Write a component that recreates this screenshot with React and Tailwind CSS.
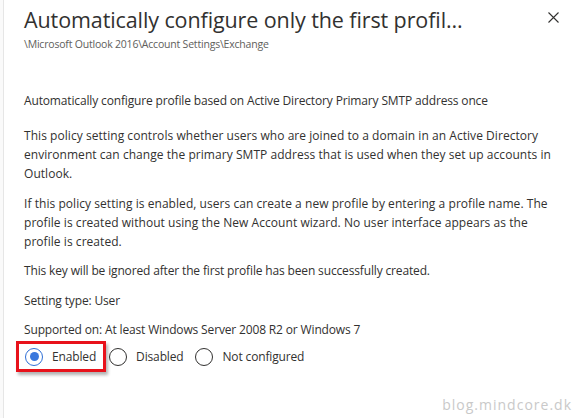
function Radio({ label, checked }) {
  return (
    <label className="flex items-center gap-[9px]">
      <span
        className={
          "flex h-[18px] w-[18px] items-center justify-center rounded-full border " +
          (checked ? "border-[#2f6fd6]" : "border-[#323130]")
        }
      >
        {checked && <span className="h-[9px] w-[9px] rounded-full bg-[#3a78dd]" />}
      </span>
      <span>{label}</span>
    </label>
  );
}

export default function App() {
  return (
    <div className="relative flex h-[418px] w-[580px] overflow-hidden bg-white font-['Open_Sans','Noto_Sans',sans-serif] text-[#323130]">
      <div className="w-[4px] shrink-0 border-r border-[#e6e6e6] bg-[#fafafa]" />

      <div className="flex-1 pl-[20px]">
        <div className="flex items-start justify-between">
          <div className="min-w-0">
            <h1 className="whitespace-nowrap pt-[4px] text-[21.5px] leading-[32px] tracking-[-0.1px]">
              Automatically configure only the first profil...
            </h1>
            <p className="mt-[1px] whitespace-nowrap text-[10.5px] leading-[14px] tracking-[-0.2px] text-[#605e5c]">
              \Microsoft Outlook 2016\Account Settings\Exchange
            </p>
          </div>
          <button className="mr-[21px] mt-[12px] text-[#323130]">
            <svg width="11" height="11" viewBox="0 0 11 11" fill="none" stroke="currentColor" strokeWidth="1.1">
              <path d="M0.5 0.5 L10.5 10.5 M10.5 0.5 L0.5 10.5" />
            </svg>
          </button>
        </div>

        <div className="mt-[40px] whitespace-nowrap text-[12px] leading-[19px] tracking-[-0.15px]">
          <p>Automatically configure profile based on Active Directory Primary SMTP address once</p>
          <p className="mt-[16px] tracking-[0.05px]">
            This policy setting controls whether users who are joined to a domain in an Active Directory
            <br />
            environment can change the primary SMTP address that is used when they set up accounts in
            <br />
            Outlook.
          </p>
          <p className="mt-[11px] tracking-[0.05px]">
            If this policy setting is enabled, users can create a new profile by entering a profile name. The
            <br />
            profile is created without using the New Account wizard. No user interface appears as the
            <br />
            profile is created.
          </p>
          <p className="mt-[10px]">This key will be ignored after the first profile has been successfully created.</p>
          <p className="mt-[11px]">Setting type: User</p>
          <p className="mt-[10px]">Supported on: At least Windows Server 2008 R2 or Windows 7</p>

          <div className="mt-[2px] flex items-center">
            <div className="-ml-[8px] border-[3px] border-[#e8121b] py-[3px] pl-[6px] pr-[7px] shadow-[2px_3px_3px_rgba(0,0,0,0.3)]">
              <Radio label="Enabled" checked />
            </div>
            <div className="ml-[3px]">
              <Radio label="Disabled" />
            </div>
            <div className="ml-[12px]">
              <Radio label="Not configured" />
            </div>
          </div>
        </div>
      </div>

      <div className="absolute bottom-[3px] right-[8px] text-[14px] tracking-[1px] text-[#c9c9c9]">
        blog.mindcore.dk
      </div>
    </div>
  );
}
